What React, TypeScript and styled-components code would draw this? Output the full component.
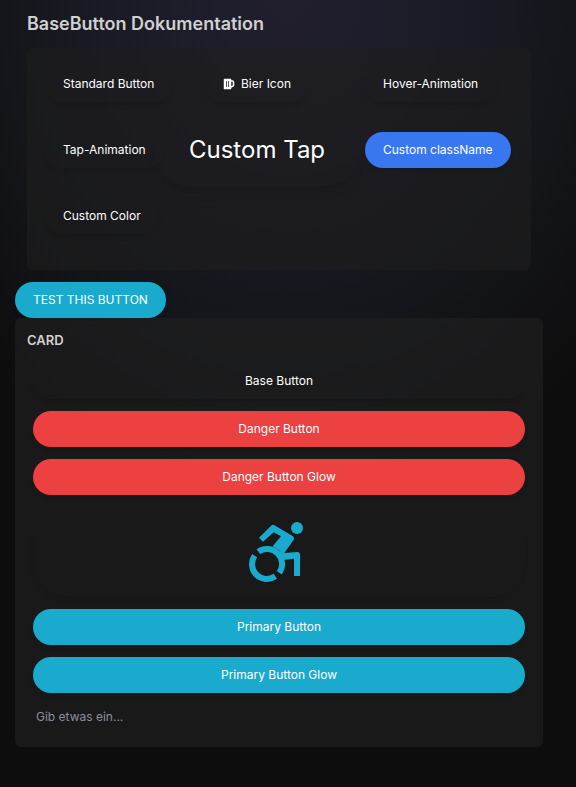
import React from "react";
import styled, { createGlobalStyle } from "styled-components";
import { FaBeer } from "react-icons/fa";

const GlobalStyle = createGlobalStyle`
  *, *::before, *::after { box-sizing: border-box; }
  html { background: #0d0d0d; }
  body {
    margin: 0;
    min-height: 100vh;
    color: #d0d0d0;
    font: 400 12px/18px Inter, "Liberation Sans", sans-serif;
    background: radial-gradient(ellipse 75% 500px at 50% 0, #211f2e 0%, #1c1c29 32%, #15161b 65%, #0d0d0d 100%) no-repeat #0d0d0d;
  }
`;

const Page = styled.main`
  display: flex;
  flex-direction: column;
  align-items: flex-start;
  padding: 0 33px 40px 15px;
`;

const Section = styled.section`
  display: flex;
  flex-direction: column;
  gap: 12px;
  width: 100%;
  padding: 12px;
`;

const Title = styled.h1`
  margin: 0;
  font-size: 18px;
  line-height: 24px;
  font-weight: 600;
`;

const DemoGrid = styled.div`
  display: grid;
  grid-template-columns: repeat(3, minmax(0, 1fr));
  grid-auto-rows: 54px;
  gap: 12px;
  place-items: start;
  padding: 18px;
  border-radius: 6px;
  background: rgba(29, 29, 29, 0.65);
`;

const Card = styled.section`
  width: 100%;
  padding: 12px;
  border-radius: 6px;
  background: rgba(32, 32, 32, 0.65);
`;

const CardTitle = styled.h2`
  margin: 0;
  font-size: 13px;
  line-height: 21px;
  font-weight: 600;
`;

const Stack = styled.div`
  display: flex;
  flex-direction: column;
  gap: 12px;
  padding: 12px 6px 6px;
`;

type Tone = "base" | "custom" | "danger" | "primary";

const tones: Record<Tone, string> = {
  base: "transparent",
  custom: "#3977f0",
  danger: "#ec4041",
  primary: "#19aacd",
};

const BaseButton = styled.button<{ $tone?: Tone; $enlarged?: boolean }>`
  display: inline-flex;
  align-items: center;
  justify-content: center;
  gap: 6px;
  padding: 9px 18px;
  border: 0;
  border-radius: 36px;
  color: #fff;
  font: inherit;
  white-space: nowrap;
  cursor: pointer;
  background: ${({ $tone = "base" }) => tones[$tone]};
  box-shadow: 0 5px 6px -3px rgba(0, 0, 0, 0.14);
  transform: ${({ $enlarged }) => ($enlarged ? "scale(2)" : "none")};
`;

const AccentIcon = styled.svg`
  width: 72px;
  height: 72px;
  color: #19aacd;
`;

const TextField = styled.input`
  width: 100%;
  height: 24px;
  padding: 2px 3px 4px;
  border: 0;
  outline: 0;
  color: #fff;
  font: inherit;
  background: transparent;

  &::placeholder { color: #8b909c; opacity: 1; }
`;

function WheelchairIcon() {
  return (
    <AccentIcon viewBox="39 33 216 216" fill="currentColor" aria-hidden="true">
      <circle cx="201" cy="69" r="18" />
      <path d="M87 98 L125 61 Q128 58 132 60 L188 93 Q195 98 190 106 L163 144 L202 141 Q210 141 210 149 V213 H192 V161 L160 165 L150 138 L128 124 L153 94 L131 82 L99 110 Z" />
      <path
        d="M85 140 A45 45 0 0 1 143 145 A45 45 0 0 1 148 203 M74 152 A45 45 0 0 0 79 209 A45 45 0 0 0 136 214"
        fill="none"
        stroke="currentColor"
        strokeWidth="18"
      />
    </AccentIcon>
  );
}

export default function App() {
  return (
    <>
      <GlobalStyle />
      <Page>
        <Section>
          <Title>BaseButton Dokumentation</Title>
          <DemoGrid>
            <BaseButton>Standard Button</BaseButton>
            <BaseButton><FaBeer size={12} />Bier Icon</BaseButton>
            <BaseButton>Hover-Animation</BaseButton>
            <BaseButton>Tap-Animation</BaseButton>
            <BaseButton $enlarged>Custom Tap</BaseButton>
            <BaseButton $tone="custom">Custom className</BaseButton>
            <BaseButton>Custom Color</BaseButton>
          </DemoGrid>
        </Section>
        <BaseButton $tone="primary">TEST THIS BUTTON</BaseButton>
        <Card>
          <CardTitle>CARD</CardTitle>
          <Stack>
            <BaseButton>Base Button</BaseButton>
            <BaseButton $tone="danger">Danger Button</BaseButton>
            <BaseButton $tone="danger">Danger Button Glow</BaseButton>
            <BaseButton aria-label="Rollstuhl">
              <WheelchairIcon />
            </BaseButton>
            <BaseButton $tone="primary">Primary Button</BaseButton>
            <BaseButton $tone="primary">Primary Button Glow</BaseButton>
            <TextField aria-label="Eingabe" placeholder="Gib etwas ein..." />
          </Stack>
        </Card>
      </Page>
    </>
  );
}
